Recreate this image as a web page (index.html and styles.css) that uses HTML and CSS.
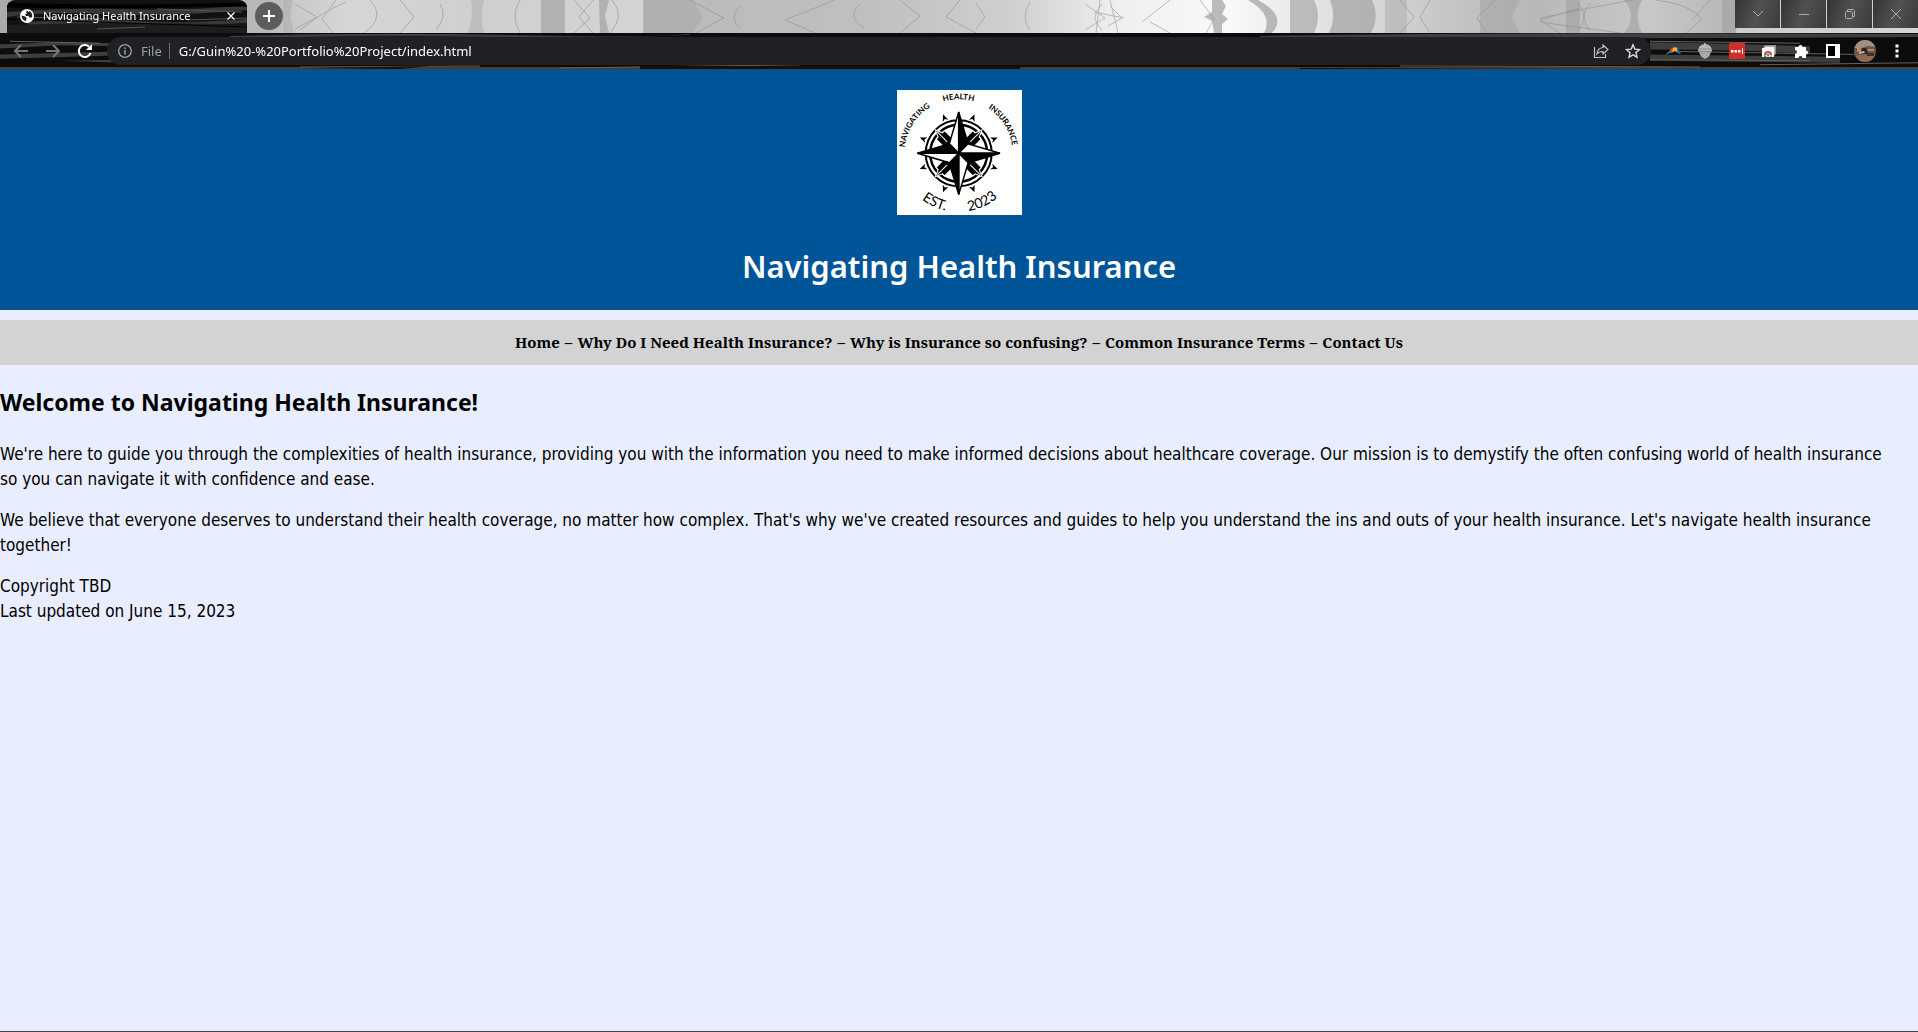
FILE: index.html
```html
<!DOCTYPE html>
<html lang="en">
<head>
<meta charset="utf-8">
<title>Navigating Health Insurance</title>
<link rel="stylesheet" href="styles.css">
</head>
<body>
<div class="browser">
  <div class="tabstrip">
    <svg class="backdrop" viewBox="0 0 1918 33" preserveAspectRatio="none" aria-hidden="true">
      <defs>
        <linearGradient id="mist">
          <stop offset="0" stop-color="#aaa"/><stop offset=".14" stop-color="#b8b8b8"/><stop offset=".152" stop-color="#c8c8c8"/>
          <stop offset=".18" stop-color="#d6d6d6"/><stop offset=".25" stop-color="#cfcfcf"/><stop offset=".335" stop-color="#d4d4d4"/>
          <stop offset=".336" stop-color="#bababa"/><stop offset=".45" stop-color="#bfbfbf"/><stop offset=".53" stop-color="#d0d0d0"/>
          <stop offset=".58" stop-color="#eee"/><stop offset=".64" stop-color="#fafafa"/><stop offset=".7" stop-color="#ddd"/>
          <stop offset=".76" stop-color="#c4c4c4"/><stop offset=".8" stop-color="#b8b8b8"/><stop offset=".86" stop-color="#c8c8c8"/>
          <stop offset=".91" stop-color="#b4b4b4"/><stop offset="1" stop-color="#ccc"/>
        </linearGradient>
      </defs>
      <rect width="1918" height="33" fill="url(#mist)"/>
      <g fill="#a6a6a6" opacity=".75">
        <path d="M283 0h10l-3 16 4 17h-11z" opacity=".6"/>
        <path d="M471 0h13q-5 16 0 33h-16q6-16 3-33z" opacity=".6"/>
        <path d="M541 0h24v33h-24z"/><path d="M599 0h10l-4 16 4 17h-9z"/>
        <path d="M643 0h50l10 17-10 16h-50z" opacity=".7"/>
        <path d="M1212 0h10l4 6-4 8 6 5-6 5v9h-8l-2-12-8-4 8-5z"/>
        <path d="M1248 0h10q30 16 14 33h-8q10-18-16-33z"/>
        <path d="M1290 0h24q8 16 0 33h-24z" opacity=".9"/><path d="M1330 0h42q8 17-1 33h-42q8-16 1-33z"/>
        <path d="M1385 0h22v33h-22z" opacity=".6"/><path d="M1480 0h40l-8 17 8 16h-40z" opacity=".8"/>
        <path d="M1566 0h14v33h-14z"/><path d="M1624 0q14 16 0 33h18q-9-17 0-33z"/><path d="M1722 0h16v33h-16z"/>
      </g>
      <g fill="none" stroke="#8c8c8c" opacity=".55">
        <path d="M336 0l-14 19 11 14M295 4l22 13-22 12M370 0q16 18-6 33M400 0l14 17-14 16M300 30q22-18 46-28"/>
        <path d="M574 0l16 18-16 15M593 0l-14 17 14 16M612 0q14 16-2 33"/>
        <path d="M690 0l34 18-28 15M835 0l-50 20 30 13M900 0l20 16-20 17M960 0l-14 17 30 16M976 3l9 14-9 12"/>
        <path d="M1085 4l20 14-20 12M1100 0l-4 33M1110 0l8 33M1142 22l28-22M1150 22l20 11M1200 0l14 19-8 14"/>
        <path d="M1400 0l14 17-14 16M1430 0l-10 17 10 16M1495 0l-18 18 10 15M1580 8l-40 12 20 13"/>
        <path d="M1540 18l60-12 32-6M1540 22l80 11M1578 3q12 14 0 28M1590 3q-12 14 0 28M1656 0q34 4 46 19l-16 14M1710 0l-18 20"/>
        <path d="M1102 4q-14 14 0 26M1110 6l12 12-14 8M1094 12l30 6M740 6q-12 12 0 22M860 4q-14 12 4 24M1030 2q-10 16 0 28M440 4q8 12-4 26M520 0q-10 16 0 33"/>
      </g>
      <path d="M1736 28h182v5h-182z" fill="#ddd" opacity=".6"/>
    </svg>
    <div class="tab">
      <svg class="backdrop" viewBox="0 0 240 33" preserveAspectRatio="none" aria-hidden="true">
        <path d="M0 0h240v33H0z" fill="#111"/>
        <path d="M0 12q60-5 120-3t120-4v5q-80 7-140 4T0 17zM20 22q60-4 110-1t110-2v4q-80 4-120 3T20 25z" fill="#383838"/>
        <path d="M0 25q120-4 240 0v8H0z" fill="#1d1d1d"/><path d="M90 29l48-2M150 9l85 3M10 17l90 2M180 20l60-2" stroke="#555"/>
        <path d="M0 3q90 4 240 0v3q-120 3-240 1zM0 19l240 8" stroke="#000" fill="#000"/>
      </svg>
      <svg class="favicon" viewBox="0 0 14 14" aria-hidden="true"><circle cx="7" cy="7" r="7" fill="#fff"/><path d="M1.500 6.500l3.500 1q1.500.5 1.500 2l-.5 2.500Q2 11.500 1.500 6.500zM7 1.500l-1 2 1 1-2 1 1 1.500h2.500l1 1.500H12Q13 4 9.500 2l-1 1z" fill="#202020"/></svg>
      <span class="tab-title">Navigating Health Insurance</span>
      <button class="tab-close" aria-label="Close tab"><svg width="10" height="10" viewBox="0 0 10 10"><path d="M1.500 1.500l7 7M8.500 1.500l-7 7" stroke="#fff" stroke-width="1.300"/></svg></button>
    </div>
    <button class="new-tab" aria-label="New tab"><svg width="12" height="12" viewBox="0 0 12 12"><path d="M6 0v12M0 6h12" stroke="#fff" stroke-width="2"/></svg></button>
    <div class="window-buttons">
      <button aria-label="Search tabs"><svg width="12" height="12" viewBox="0 0 12 12"><path d="M1 3l5 5 5-5"/></svg></button>
      <button aria-label="Minimize"><svg width="12" height="12" viewBox="0 0 12 12"><path d="M1 6.500h10"/></svg></button>
      <button aria-label="Restore"><svg width="12" height="12" viewBox="0 0 12 12"><rect x="1.500" y="3.500" width="7" height="7" rx="1"/><path d="M3.500 3V1.500h6l1 1v6H9"/></svg></button>
      <button aria-label="Close"><svg width="12" height="12" viewBox="0 0 12 12"><path d="M1 1l10 10M11 1L1 11"/></svg></button>
    </div>
  </div>

  <div class="toolbar">
    <svg class="backdrop" viewBox="0 0 1918 36" preserveAspectRatio="none" aria-hidden="true">
      <path d="M0 0h1918v36H0z" fill="#0c0c0c"/>
      <path d="M0 33h1918v3H0z" fill="#404040"/>
      <g fill="#3e3e3e">
        <path d="M230 3q140-4 280-1t180-1v1q-100 4-200 2t-260 1z"/>
        <path d="M1260 3q200-4 658-2v3q-300 2-658 1z"/>
        <path d="M0 11l60-2 58 1v3l-58-1-60 3zM0 21l118-3v4L0 25zM60 27l60-1v3z"/>
        <path d="M1650 9q80 1 160 4v7q-80-4-160-4zM1650 21l190 2v6l-190-2z"/>
      </g>
      <g stroke="#606060" fill="none"><path d="M1650 8l150 2M1680 18l180 3M1650 26l160 1M1760 31l158-2M10 8l90 2M300 33l180-1M560 34l240-3M1400 32l300 1"/></g>
      <path d="M640 32h380v3H640zM300 34l130-2-30 3zM1300 34l300 1h-300z" fill="#111"/>
    </svg>
    <div class="nav-buttons">
      <button aria-label="Back"><svg width="16" height="16" viewBox="0 0 16 16" stroke="#777"><path d="M15 8H2M8 2L2 8l6 6"/></svg></button>
      <button aria-label="Forward"><svg width="16" height="16" viewBox="0 0 16 16" stroke="#777"><path d="M1 8h13M8 2l6 6-6 6"/></svg></button>
      <button aria-label="Reload"><svg width="16" height="16" viewBox="0 0 16 16" stroke="#fff"><path d="M13.500 10A6 6 0 1 1 12 3.700" stroke-width="2"/><path d="M15 1v6H9z" fill="#fff" stroke="none"/></svg></button>
    </div>
    <div class="omnibox">
      <svg width="14" height="14" viewBox="0 0 14 14" fill="none" stroke="#9aa0a6" aria-hidden="true"><circle cx="7" cy="7" r="6.300" stroke-width="1.300"/><path d="M7 6v4.500M7 3.500v1.500" stroke-width="1.500"/></svg>
      <label class="scheme" for="address">File</label>
      <input id="address" class="address" type="text" value="G:/Guin%20-%20Portfolio%20Project/index.html">
      <button aria-label="Share"><svg width="16" height="16" viewBox="0 0 16 16" stroke="#c4c4c4"><path d="M1.500 4v10.500h11V11M10 2l5 4.500L10 11V8.500Q6 8.500 4 11q.5-6 6-6.500z" stroke-width="1.200"/></svg></button>
      <button aria-label="Bookmark"><svg width="16" height="16" viewBox="0 0 16 16" stroke="#d8d8d8"><path d="M8 1.800l1.800 4.300 4.700.4-3.600 3.100 1.100 4.600L8 11.800l-4 2.400 1.100-4.600L1.500 6.500l4.700-.4z" stroke-width="1.400"/></svg></button>
    </div>
    <div class="extensions">
      <button aria-label="Rainbow extension"><svg width="18" height="18" viewBox="0 0 18 18"><path d="M1 13q3-3 5-4l2 1-2 1q-3 1-5 2z" fill="#2a9d4a"/><path d="M4 10l4-4 1 3-3 2z" fill="#1768c4"/><path d="M6 8q2-3 5-3l-1 5-3 1z" fill="#e53b2c"/><path d="M9 6q4-2 5 1l0 4-3-2-3 1z" fill="#fbb416"/><path d="M13 6q2 1 4 6l-4-1z" fill="#1768c4"/></svg></button>
      <button aria-label="Acorn extension"><svg width="16" height="16" viewBox="0 0 16 16"><path d="M8 0v2" stroke="#aaa" stroke-width="2"/><path d="M1 8Q1 2 8 1q7 1 7 7z" fill="#b8b8b8"/><path d="M2 8h12q0 5-6 8-6-3-6-8z" fill="#a8a8a8"/><path d="M1 8.500h14M2 6h12" stroke="#888"/></svg></button>
      <button aria-label="Password manager"><svg width="16" height="16" viewBox="0 0 16 16"><rect width="16" height="16" rx="1" fill="#d32d27"/><path d="M2 7h2.500v2.500H2zM5.500 7H8v2.500H5.500zM9 7h2.500v2.500H9zM13 5h1v6h-1z" fill="#fff"/></svg></button>
      <button aria-label="Chrome tabs"><svg width="16" height="16" viewBox="0 0 16 16"><path d="M4 2h11v9H4z" fill="#aaa"/><path d="M3 3h11v9H3z" fill="#eee" stroke="#777"/><path d="M1 5h12v9H1z" fill="#f6f6f6"/><path d="M3 12a4 4 0 0 1 8 0z" fill="#e64335"/><path d="M3 11v3h3z" fill="#32a852"/><path d="M8 14l3-3v3z" fill="#fbbc05"/><circle cx="7" cy="12" r="1.800" fill="#4285f4" stroke="#fff" stroke-width=".6"/></svg></button>
      <button aria-label="Extensions"><svg width="16" height="16" viewBox="0 0 16 16"><path d="M2 4h3.500a2 2 0 1 1 4 0H13v3.500a2 2 0 1 1 0 4V15H9.500a2 2 0 1 0-4 0H2v-4a2 2 0 1 0 0-4z" fill="#fff"/></svg></button>
      <button aria-label="Side panel"><svg width="14" height="14" viewBox="0 0 14 14"><path d="M1 1h12v12H1z" fill="#000" stroke="#fff" stroke-width="2"/><path d="M9 0h5v14H9z" fill="#fff"/></svg></button>
      <button aria-label="Profile"><svg width="22" height="22" viewBox="0 0 22 22"><clipPath id="face"><circle cx="11" cy="11" r="11"/></clipPath><g clip-path="url(#face)"><path d="M0 0h22v22H0z" fill="#705449"/><path d="M0 0h22v7l-8-1-7 2H0z" fill="#9d9284"/><path d="M3 8h4v4H3zM14 9h6v2h-6z" fill="#b58a6a"/><path d="M8 8h4l2 5-7 3z" fill="#2c2226"/><path d="M0 16l10-2 12 1v7H0z" fill="#8f6a53"/><path d="M5 12l5-1 1 2-6 1z" fill="#c9b19c"/><path d="M13 13h7v3h-7z" fill="#43302b"/></g></svg></button>
      <button aria-label="Menu"><svg width="4" height="14" viewBox="0 0 4 14"><path d="M.5 .5h3v3h-3zM.5 5.500h3v3h-3zM.5 10.500h3v3h-3z" fill="#fff"/></svg></button>
    </div>
  </div>
</div>

<div class="page">
  <header class="site-header">
    <svg class="logo" viewBox="0 0 125 125" role="img" aria-label="Navigating Health Insurance, established 2023">
      <defs>
        <path id="arc-top" d="M7.500 63.300a54 54 0 0 1 108 0"/>
        <path id="arc-bottom" d="M1.500 62a60 60 0 0 0 120 0"/>
        <g id="point" stroke="#000" stroke-width="1.500"><path d="M61.700 63.300V22l-9.500 32z" fill="#fff"/><path d="M61.700 63.300V22l9.500 32z"/></g>
        <g id="pin"><path d="M61.700 63.300l-6-8v-18h3l3-7 3 7h3v18z" fill="#000" stroke="#fff"/><path d="M61.700 33v14" stroke="#fff"/></g>
        <path id="tick" d="M61.700 21.300l3 7-3-2-3 2z"/>
      </defs>
      <path d="M0 0h125v125H0z" fill="#fff"/>
      <circle cx="61.700" cy="63.300" r="33" fill="none" stroke="#000" stroke-width="2"/>
      <circle cx="61.700" cy="63.300" r="28.500" fill="none" stroke="#000" stroke-width="2.500"/>
      <use href="#pin" transform="rotate(45 61.700 63.300)"/><use href="#pin" transform="rotate(135 61.700 63.300)"/><use href="#pin" transform="rotate(225 61.700 63.300)"/><use href="#pin" transform="rotate(315 61.700 63.300)"/>
      <use href="#point"/><use href="#point" transform="rotate(90 61.700 63.300)"/><use href="#point" transform="rotate(180 61.700 63.300)"/><use href="#point" transform="rotate(270 61.700 63.300)"/>
      <use href="#tick" transform="rotate(22 61.700 63.300)"/><use href="#tick" transform="rotate(68 61.700 63.300)"/><use href="#tick" transform="rotate(112 61.700 63.300)"/><use href="#tick" transform="rotate(158 61.700 63.300)"/><use href="#tick" transform="rotate(202 61.700 63.300)"/><use href="#tick" transform="rotate(248 61.700 63.300)"/><use href="#tick" transform="rotate(292 61.700 63.300)"/><use href="#tick" transform="rotate(338 61.700 63.300)"/>
      <g class="logo-name">
        <text><textPath href="#arc-top" startOffset="18%">NAVIGATING</textPath></text>
        <text><textPath href="#arc-top" startOffset="50%">HEALTH</textPath></text>
        <text><textPath href="#arc-top" startOffset="82%">INSURANCE</textPath></text>
      </g>
      <g class="logo-year">
        <text><textPath href="#arc-bottom" startOffset="36%">EST.</textPath></text>
        <text><textPath href="#arc-bottom" startOffset="64%">2023</textPath></text>
      </g>
    </svg>
    <h1>Navigating Health Insurance</h1>
  </header>
  <nav class="site-nav">
    <a href="#">Home</a><span>–</span><a href="#">Why Do I Need Health Insurance?</a><span>–</span><a href="#">Why is Insurance so confusing?</a><span>–</span><a href="#">Common Insurance Terms</a><span>–</span><a href="#">Contact Us</a>
  </nav>
  <main>
    <h2>Welcome to Navigating Health Insurance!</h2>
    <p>We're here to guide you through the complexities of health insurance, providing you with the information you need to make informed decisions about healthcare coverage. Our mission is to demystify the often confusing world of health insurance so you can navigate it with confidence and ease.</p>
    <p>We believe that everyone deserves to understand their health coverage, no matter how complex. That's why we've created resources and guides to help you understand the ins and outs of your health insurance. Let's navigate health insurance together!</p>
  </main>
  <footer>Copyright TBD<br>Last updated on June 15, 2023</footer>
</div>
</body>
</html>
```
FILE: styles.css
```css
* { box-sizing: border-box; }

body {
  margin: 0;
  min-height: 100vh;
  display: flex;
  flex-direction: column;
  background: #e8eeff;
  color: #000;
  font: 17px/25px "DejaVu Sans Condensed", "DejaVu Sans", sans-serif;
}

button {
  display: flex;
  align-items: center;
  justify-content: center;
  padding: 0;
  border: 0;
  background: none;
}

/* Browser frame */
.browser { font-family: "Noto Sans", sans-serif; }
.browser svg { flex: none; }

.backdrop {
  position: absolute;
  inset: 0;
  width: 100%;
  height: 100%;
  z-index: -1;
}

.tabstrip {
  position: relative;
  z-index: 0;
  display: flex;
  height: 33px;
  padding-left: 7px;
}

.tab {
  position: relative;
  z-index: 0;
  display: flex;
  align-items: center;
  width: 240px;
  padding: 0 10px 2px 13px;
  border-radius: 8px 8px 0 0;
  overflow: hidden;
  color: #fff;
  font-size: 11px;
  line-height: 16px;
}

.favicon { width: 14px; height: 14px; margin-right: 9px; }
.tab-title { flex: 1; }
.tab-close { width: 12px; height: 16px; }

.new-tab {
  width: 28px;
  height: 28px;
  margin: 2px 0 0 8px;
  border-radius: 50%;
  background: #5c5c5c;
}

.window-buttons {
  display: flex;
  gap: 1px;
  height: 28px;
  margin-left: auto;
  background: #d0d0d0;
}

.window-buttons button {
  width: 45px;
  background: linear-gradient(110deg, #333, #515151 50%, #3a3a3a);
}

.window-buttons svg { fill: none; stroke: #aaa; }

.toolbar {
  position: relative;
  z-index: 0;
  display: flex;
  align-items: center;
  height: 37px;
  padding-bottom: 1px;
}

.nav-buttons { display: flex; padding-left: 5px; margin-right: 6px; }
.nav-buttons button { width: 32px; height: 28px; }
.nav-buttons svg { fill: none; stroke-width: 2; }

.omnibox {
  flex: 1;
  display: flex;
  align-items: center;
  height: 28px;
  padding: 0 2px 0 11px;
  border-radius: 14px;
  background: #202124;
  font-size: 13px;
  line-height: 16px;
}

.omnibox button { width: 32px; height: 28px; fill: none; }

.scheme {
  padding-right: 7px;
  margin: 0 9px;
  border-right: 1px solid #6b6e72;
  color: #9aa0a6;
}

.address {
  flex: 1;
  min-width: 0;
  padding: 0;
  border: 0;
  background: none;
  color: #fff;
  font: inherit;
}

.extensions { display: flex; padding: 0 5px 0 6px; }
.extensions button { width: 32px; height: 28px; }

/* Web page */
.page { flex: 1; border-bottom: 1px solid #444; }

.site-header {
  padding: 20px 0 24px;
  background: #005599;
  color: #fff;
  text-align: center;
}

.logo { display: block; width: 125px; height: 125px; margin: 0 auto; }

.logo-name {
  font: 700 8px "Lato", sans-serif;
  text-anchor: middle;
}

.logo-year {
  font: 400 14px "Lato", sans-serif;
  text-anchor: middle;
}

h1 {
  margin: 31px 0 0;
  font: 600 31px/40px "Noto Sans", sans-serif;
}

.site-nav {
  display: flex;
  justify-content: center;
  gap: 5px;
  margin-top: 10px;
  padding: 10px 0;
  background: #d3d3d3;
  font: 700 15px/25px "Noto Serif", serif;
}

.site-nav a { color: inherit; text-decoration: none; }

main { padding-right: 24px; }

h2 {
  margin: 23px 0 26px;
  font: 700 23px/28px "Noto Sans", sans-serif;
}

p { margin: 0 0 16px; }
```
